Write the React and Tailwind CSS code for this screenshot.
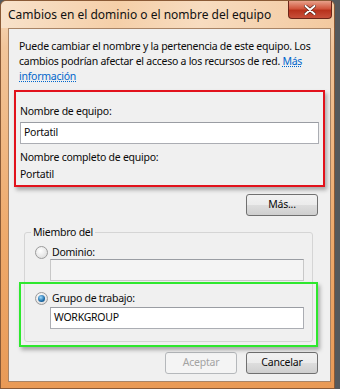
import React from 'react';

const font = { fontFamily: '"Noto Sans", "Open Sans", sans-serif' };

const VistaButton = ({ children, disabled }) => (
  <div
    className={
      'w-[72px] h-[22px] rounded-[3px] border flex items-center justify-center text-[10.5px] tracking-[-0.2px] ' +
      (disabled
        ? 'border-[#b5b8bb] text-[#a3a3a3] bg-[#f4f4f4]'
        : 'border-[#707070] text-[#0a0a0a] bg-[linear-gradient(#f2f2f2_0%,#ebebeb_50%,#dddddd_51%,#cfcfcf_100%)]')
    }
  >
    {children}
  </div>
);

const TextBox = ({ value, disabled, className = '' }) => (
  <div
    className={
      'h-[22px] border border-[#abadb3] border-t-[#9a9da3] flex items-center px-[3px] text-[#0a0a0a] ' +
      (disabled ? 'bg-[#f4f4f4] border-[#c8c8c8]' : 'bg-white') +
      ' ' + className
    }
  >
    {value}
  </div>
);

const Radio = ({ checked }) => (
  <span className="w-[13px] h-[13px] rounded-full border border-[#9b9b9b] bg-[radial-gradient(circle_at_40%_35%,#ffffff,#d6d6d6)] flex items-center justify-center shrink-0">
    {checked && (
      <span className="w-[7px] h-[7px] rounded-full bg-[radial-gradient(circle_at_40%_35%,#9fdcff,#1b6ba8_60%,#0c3d66)]" />
    )}
  </span>
);

export default function App() {
  return (
    <div className="w-[340px] h-[389px] flex bg-[#55595c] overflow-hidden" style={font}>
      <div className="w-[335px] h-full flex flex-col rounded-t-[6px] border border-[#8a5a36] bg-[linear-gradient(180deg,#f7dcc0_0%,#f2c59a_12%,#eeaa6c_60%,#e99a56_100%)]">
        {/* title bar */}
        <div className="h-[27px] flex items-start justify-between bg-[linear-gradient(100deg,#f8e2cb_0%,#f5cfa8_35%,#f7dcc0_60%,#f3c99f_100%)] rounded-t-[6px]">
          <span className="pl-[7px] pt-[6px] text-[12px] leading-[16px] text-[#111] whitespace-nowrap">
            Cambios en el dominio o el nombre del equipo
          </span>
          <div className="mr-[2px] w-[44px] h-[18px] rounded-b-[4px] border border-t-0 border-[#6b2518] bg-[linear-gradient(#e8a08a_0%,#d0553c_45%,#b8321c_55%,#c8503a_100%)] flex items-center justify-center shrink-0">
            <svg width="12" height="10" viewBox="0 0 12 10">
              <path d="M1.5 1 L10.5 9 M10.5 1 L1.5 9" stroke="#4a1a10" strokeWidth="3.2" strokeLinecap="round" />
              <path d="M1.5 1 L10.5 9 M10.5 1 L1.5 9" stroke="#ffffff" strokeWidth="2" strokeLinecap="round" />
            </svg>
          </div>
        </div>

        {/* client area */}
        <div className="flex-1 ml-[7px] mr-[3px] mb-[6px] border border-[#a88466] bg-[#f0f0f0] flex flex-col text-[10.5px] tracking-[-0.25px] text-[#0a0a0a]">
          <div className="pl-[10px] pt-[10px] leading-[15px] flex flex-col whitespace-nowrap">
            <span>Puede cambiar el nombre y la pertenencia de este equipo. Los</span>
            <span>
              cambios podrían afectar el acceso a los recursos de red.{' '}
              <span className="text-[#0066cc] underline decoration-dotted">Más</span>
            </span>
            <span className="text-[#0066cc] underline decoration-dotted">información</span>
          </div>

          {/* red highlighted section */}
          <div className="mt-[6px] mx-[5px] h-[97px] border-2 border-[#e2121c] shadow-[2px_3px_4px_rgba(0,0,0,0.3)] px-[4px] pt-[12px] flex flex-col">
            <span className="leading-[15px]">Nombre de equipo:</span>
            <TextBox value="Portatil" className="mt-[3px]" />
            <span className="mt-[6px] leading-[15px]">Nombre completo de equipo:</span>
            <span className="mt-[2px] leading-[15px]">Portatil</span>
          </div>

          <div className="flex justify-end pr-[12px] mt-[7px]">
            <VistaButton>Más...</VistaButton>
          </div>

          {/* member group */}
          <div className="relative mt-[16px] ml-[15px] mr-[17px] border border-[#d5d5d5] rounded-[3px] flex flex-col">
            <span className="absolute -top-[8px] left-[6px] px-[2px] bg-[#f0f0f0] leading-[15px]">Miembro del</span>
            <div className="h-[13px] flex items-center gap-[4px] pl-[10px] mt-[13px]">
              <Radio />
              <span className="leading-[15px]">Dominio:</span>
            </div>
            <TextBox disabled className="mt-0 ml-[25px] mr-[8px]" />
            <div className="mt-[1px] -mx-[6px] -mb-[6px] h-[65px] shrink-0 border-2 border-[#2ee82e] shadow-[2px_3px_4px_rgba(0,0,0,0.3)] flex flex-col">
              <div className="h-[13px] flex items-center gap-[4px] pl-[14px] mt-[8px]">
                <Radio checked />
                <span className="leading-[15px]">Grupo de trabajo:</span>
              </div>
              <TextBox value="WORKGROUP" className="mt-[2px] ml-[29px] mr-[12px]" />
            </div>
          </div>

          <div className="flex justify-end gap-[9px] pr-[12px] mt-[10px]">
            <VistaButton disabled>Aceptar</VistaButton>
            <VistaButton>Cancelar</VistaButton>
          </div>
        </div>
      </div>
    </div>
  );
}
